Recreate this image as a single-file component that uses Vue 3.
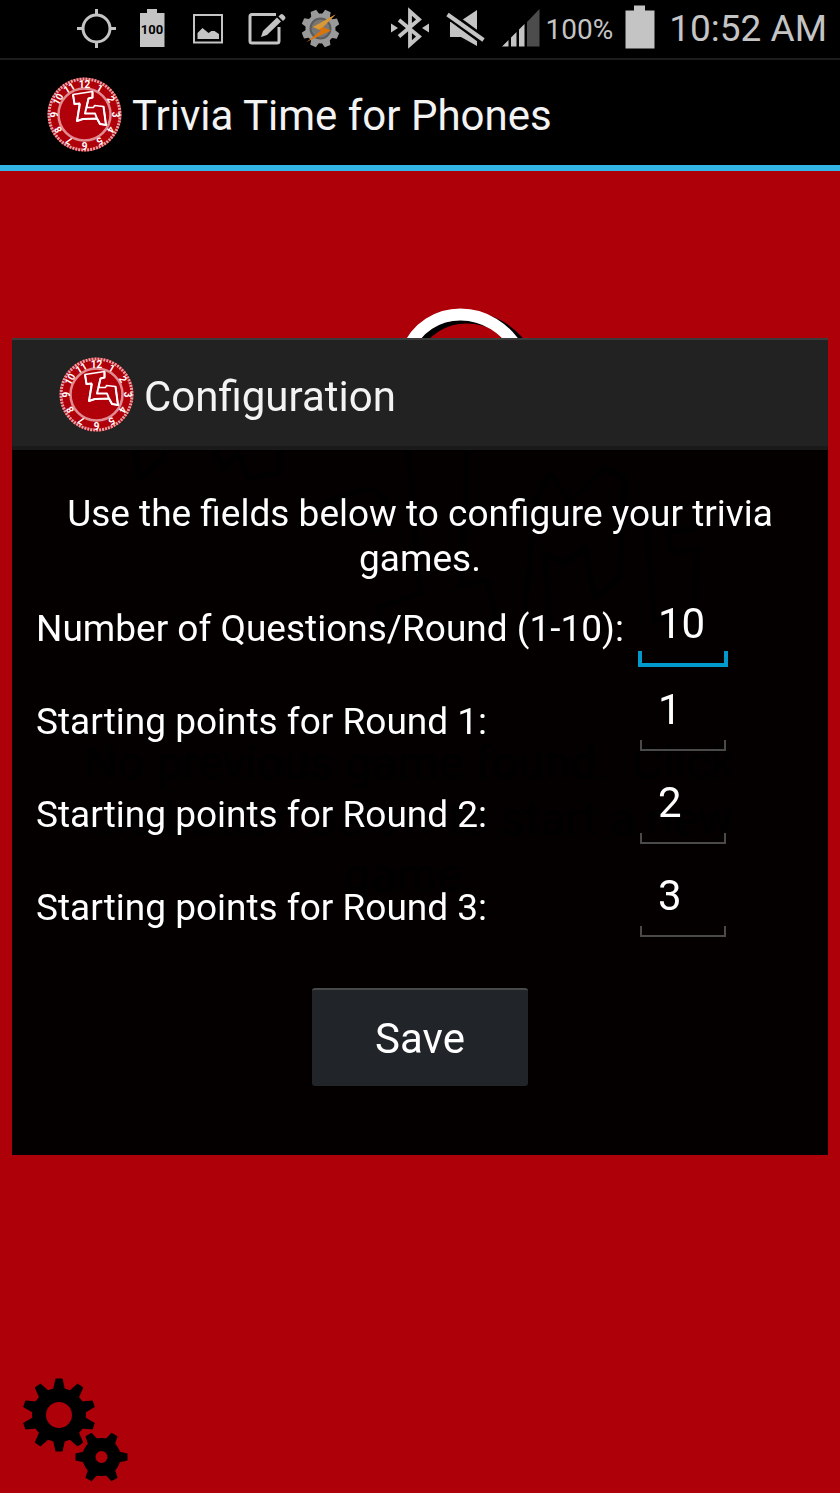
<template>
  <div class="screen">
    <header class="status-bar">
      <div class="status-group">
        <svg class="status-icon" viewBox="0 0 40 60" aria-label="Location">
          <circle cx="20.5" cy="28.5" r="13.5" fill="none" stroke="#c4c4c4" stroke-width="3" />
          <path d="M20.5 9v6M20.5 42v6M1 28.5h6M34 28.5h6" stroke="#c4c4c4" stroke-width="3" />
        </svg>
        <svg class="status-icon" viewBox="0 0 40 60" aria-label="Battery level">
          <path d="M8 13h7V9h10v4h7.500v34H8z" fill="#c4c4c4" />
          <text class="battery-text" x="20" y="34" text-anchor="middle">100</text>
        </svg>
        <svg class="status-icon" viewBox="0 0 40 60" aria-label="Picture">
          <rect x="6" y="15" width="28" height="27.500" fill="none" stroke="#c4c4c4" stroke-width="2" />
          <path d="M9.500 39V33l5-5 6 5 3-2h3l4.500 3v5z" fill="#c4c4c4" />
        </svg>
        <svg class="status-icon" viewBox="0 0 40 60" aria-label="Note">
          <path d="M32 14.500H8Q6 14.500 6 16.500V41q0 2 2 2h25q2 0 2-2V27" fill="none" stroke="#c4c4c4" stroke-width="3" />
          <path d="M17 37l2-6 14-13.500 4 4L23 35z" fill="#c4c4c4" />
          <path d="M34.500 16.500l2-2q1.500-1 3 .5l1.500 1.500q1 1.500 0 2.500l-2 2z" fill="#c4c4c4" />
        </svg>
        <svg class="status-icon" viewBox="0 0 40 60" aria-label="Tasker">
          <g fill="#9a9a9a">
            <polygon
              v-for="n in 8"
              :key="n"
              points="-4.500,-13 -3,-19 3,-19 4.500,-13"
              :transform="`translate(20.5 28.5) rotate(${n * 45 - 22})`"
            />
            <circle cx="20.500" cy="28.500" r="15" />
          </g>
          <circle cx="20.500" cy="28.500" r="10" fill="#777" stroke="#5c5c5c" stroke-width="2" />
          <path d="M35.500 14.500L13 27l8 3.500L6.500 42 31 30.500l-8-3.500z" fill="#d9740c" />
          <path d="M35.500 14.500L13 27l6 2.500 4-2.500z" fill="#d89a38" />
        </svg>
      </div>
      <div class="status-group status-right">
        <svg class="status-icon" viewBox="0 0 40 60" aria-label="Bluetooth">
          <path d="M9 20l20 16.500-9 8V11.500l9 8L9 36.500" fill="none" stroke="#c4c4c4" stroke-width="3.800" />
          <path d="M1 23.500v9l7-4.500zM39 23.500v9L32 28z" fill="#c4c4c4" />
        </svg>
        <svg class="status-icon" viewBox="0 0 40 60" aria-label="Muted">
          <path d="M4 22h9l18-12v36L15 37H4z" fill="#c4c4c4" />
          <path d="M1 13.500l35.500 26" stroke="#000" stroke-width="9" />
          <path d="M1.500 14.500L37.500 40" stroke="#c4c4c4" stroke-width="4" />
        </svg>
        <svg class="status-icon" viewBox="0 0 40 60" aria-label="Signal">
          <path d="M0 46.500l6.500-6.500v6.500zM9 37.500l5.500-5.500v14.500H9zM17 29.500l5.500-5.500v22.500H17z" fill="#c4c4c4" />
          <path d="M25 22L37.500 9v37.500H25z" fill="#4c4c4c" />
        </svg>
        <span class="battery-percent">100%</span>
        <svg class="battery-icon" viewBox="0 0 30 60" aria-label="Battery">
          <path d="M.500 10.500H9V5.500h11v5h9.500v38H.500z" fill="#c4c4c4" />
        </svg>
        <span class="clock">10:52 AM</span>
      </div>
    </header>

    <div class="action-bar">
      <svg class="app-logo" viewBox="0 0 75 75" aria-hidden="true">
        <use href="#trivia-logo" />
      </svg>
      <h1 class="bar-title">Trivia Time for Phones</h1>
    </div>

    <main class="home">
      <svg class="home-art" viewBox="0 0 600 340" aria-hidden="true">
        <path d="M293 51C312 3 379 1 408 53" fill="none" stroke="#000" stroke-width="12" />
        <path d="M287 48C306 0 373 -2 400 50" fill="none" stroke="#fff" stroke-width="12" />
        <g fill="none" stroke="#000" stroke-width="5">
          <path d="M14 130l5 45 25-20v-25M86 135l18 30 14-15 10 25 30-5 2-35" />
          <path d="M288 140l12 150-42 15v20l34-8 30 10 55-10-10-40-25 5 5-140" />
          <path d="M204 200l45-15 15 10 5 25-20 5M415 200l15-30 20 30 35-35 20 10-5 100-25 20-10-50-20 15-20-10 5 80-25-20z" />
          <path d="M525 210l50-10-2 25-25 5 5 20 25-5-5 65-38 8z" />
        </g>
      </svg>
      <p class="home-message">
        No previous game found.&nbsp; Click the button below to start a new game.
      </p>
      <button type="button" class="new-game" tabindex="-1">New Game</button>
      <button type="button" class="settings" aria-label="Settings">
        <svg viewBox="0 0 108 106">
          <g transform="translate(37 37)">
            <polygon v-for="n in 10" :key="n" points="-6,-25 -3.500,-36.500 3.500,-36.500 6,-25" :transform="`rotate(${n * 36})`" />
            <circle r="20" fill="none" stroke="#000" stroke-width="14" />
          </g>
          <g transform="translate(79.500 79)">
            <polygon v-for="n in 6" :key="n" points="-5.500,-17 -3.500,-26 3.500,-26 5.500,-17" :transform="`rotate(${n * 60 + 30})`" />
            <circle r="12.500" fill="none" stroke="#000" stroke-width="13" />
          </g>
        </svg>
      </button>
    </main>

    <div class="overlay">
      <section class="dialog" role="dialog" aria-labelledby="dialog-title">
        <div class="dialog-header">
          <svg class="app-logo" viewBox="0 0 75 75" aria-hidden="true">
            <g id="trivia-logo">
              <circle cx="37.500" cy="37.500" r="37" fill="#b0000a" />
              <circle cx="37.500" cy="37.500" r="35.500" fill="none" stroke="#e3a3a6" stroke-width="3" stroke-dasharray="2 1" />
              <circle cx="37.500" cy="37.500" r="26" fill="none" stroke="#e08c90" stroke-width="2.500" />
              <text
                v-for="n in 12"
                :key="n"
                class="logo-hour"
                text-anchor="middle"
                x="0"
                y="-27"
                :transform="`translate(37.5 37.5) rotate(${n * 30})`"
              >{{ n }}</text>
              <g fill="none" stroke="#fff" stroke-linejoin="round">
                <path d="M26 17.500L45.500 14.500V20.500L41.500 21.500L39.500 30.500H46.500L47.500 28.500L56.500 29.500L59 48L53 47L50 41.500L36 42L30 44L32.500 26.500L27.500 27z" stroke-width="1.600" />
                <path d="M45.500 14.500V20.500L41.500 21.500L38 36.500H48L50 41.500L53 47L59 48L56.500 29.500M33 26.500L30 44L36 42L50 41.500M26 17.500L27.500 27L33 26.500" stroke-width="2" />
              </g>
            </g>
          </svg>
          <h2 id="dialog-title" class="bar-title">Configuration</h2>
        </div>
        <form class="dialog-body" @submit.prevent>
          <p class="intro">Use the fields below to configure your trivia games.</p>
          <div v-for="field in fields" :key="field.id" class="field-row">
            <label :for="field.id">{{ field.label }}</label>
            <span class="field" :class="{ active: field.id === activeField }">
              <input
                :id="field.id"
                v-model="field.value"
                type="text"
                inputmode="numeric"
                @focus="activeField = field.id"
              />
            </span>
          </div>
          <button type="submit" class="save">Save</button>
        </form>
      </section>
    </div>
  </div>
</template>

<script setup>
import { reactive, ref } from "vue";

const activeField = ref("questions");

const fields = reactive([
  { id: "questions", label: "Number of Questions/Round (1-10):", value: "10" },
  { id: "round1", label: "Starting points for Round 1:", value: "1" },
  { id: "round2", label: "Starting points for Round 2:", value: "2" },
  { id: "round3", label: "Starting points for Round 3:", value: "3" },
]);
</script>

<style>
body {
  margin: 0;
  background: #ad0009;
}
</style>

<style scoped>
* {
  box-sizing: border-box;
}

.screen {
  display: flex;
  flex-direction: column;
  min-height: 100vh;
  background: #ad0009;
  color: #fff;
  font-family: Roboto, "Liberation Sans", sans-serif;
}

h1,
h2,
p {
  margin: 0;
}

button,
input {
  font-family: inherit;
}

/* Status bar */
.status-bar {
  display: flex;
  justify-content: space-between;
  height: 60px;
  padding: 0 13px 0 76px;
  background: #000;
  border-bottom: 2px solid #1c1c1c;
  color: #c4c4c4;
}

.status-group {
  display: flex;
  gap: 16px;
}

.status-right {
  gap: 0;
}

.status-icon {
  width: 40px;
  height: 60px;
  flex: none;
  overflow: visible;
}

.status-right .status-icon {
  margin-right: 16px;
}

.status-right .battery-percent {
  margin-left: -12px;
}

.battery-text {
  font-size: 13px;
  font-weight: 700;
  fill: #000;
}

.battery-percent {
  font-size: 28px;
  line-height: 60px;
}

.battery-icon {
  width: 30px;
  height: 60px;
  margin: 0 14px 0 12px;
}

.clock {
  font-size: 37px;
  line-height: 58px;
}

/* Title bars */
.action-bar {
  display: flex;
  align-items: center;
  gap: 10px;
  height: 111px;
  padding: 3px 47px 0;
  background: #000;
  border-bottom: 6px solid #33b5e5;
}

.app-logo {
  width: 75px;
  height: 75px;
  flex: none;
}

.logo-hour {
  font-size: 10px;
  font-weight: 700;
  fill: #fff;
}

.bar-title {
  padding-top: 4px;
  font-size: 42px;
  font-weight: 400;
  line-height: 50px;
  color: #f3f3f3;
}

/* Home screen */
.home {
  flex: 1;
  display: flex;
  flex-direction: column;
  align-items: center;
  padding: 132px 80px 9px;
}

.home-art {
  width: 600px;
  height: 340px;
}

.home-message {
  margin-top: 92px;
  padding-right: 22px;
  font-size: 47px;
  line-height: 56px;
  text-align: center;
  color: #000;
}

.new-game {
  margin-top: 118px;
  padding: 20px 32px;
  border: 0;
  background: none;
  color: #000;
  font-size: 42px;
  line-height: 56px;
}

.settings {
  width: 108px;
  height: 106px;
  margin: auto 0 0 -58px;
  padding: 0;
  border: 0;
  background: none;
  align-self: flex-start;
}

.settings svg {
  display: block;
}

/* Configuration dialog */
.overlay {
  position: fixed;
  inset: 0;
  display: flex;
  align-items: center;
  justify-content: center;
  padding: 12px;
  pointer-events: none;
}

.dialog {
  width: 100%;
  pointer-events: auto;
}

.dialog-header {
  display: flex;
  align-items: center;
  gap: 10px;
  height: 112px;
  padding: 3px 47px 0;
  background: #222;
  border-top: 2px solid #3c3c3c;
  border-bottom: 4px solid #1a1a1a;
}

.dialog-body {
  display: flex;
  flex-direction: column;
  padding: 41px 24px 69px;
  background: rgba(0, 0, 0, 0.98);
}

.intro {
  margin-bottom: 6px;
  font-size: 37px;
  line-height: 45px;
  text-align: center;
}

.field-row {
  display: flex;
  align-items: flex-start;
  height: 93px;
}

.intro + .field-row {
  height: 86px;
}

.field-row label {
  align-self: flex-end;
  width: 602px;
  margin-bottom: 22px;
  font-size: 37px;
  line-height: 44px;
  white-space: nowrap;
}

.field {
  position: relative;
  width: 90px;
  height: 80px;
}

/* underline with short upturned ends */
.field::after {
  content: "";
  position: absolute;
  inset: auto 2px 2px;
  height: 9px;
  border: 2px solid #4a4a4a;
  border-top: 0;
  pointer-events: none;
}

.field.active::after {
  inset: auto 0 0;
  height: 12px;
  border: 4px solid #0099cc;
  border-top: 0;
}

.field input {
  width: 100%;
  height: 72px;
  padding: 0 20px;
  border: 0;
  outline: 0;
  background: none;
  color: #fff;
  font-size: 42px;
}

.save {
  align-self: center;
  width: 216px;
  height: 98px;
  margin-top: 36px;
  padding: 0;
  border: 0;
  border-top: 2px solid #47494b;
  border-radius: 3px;
  background: rgba(34, 37, 41, 0.97);
  color: #fff;
  font-size: 42px;
}
</style>
